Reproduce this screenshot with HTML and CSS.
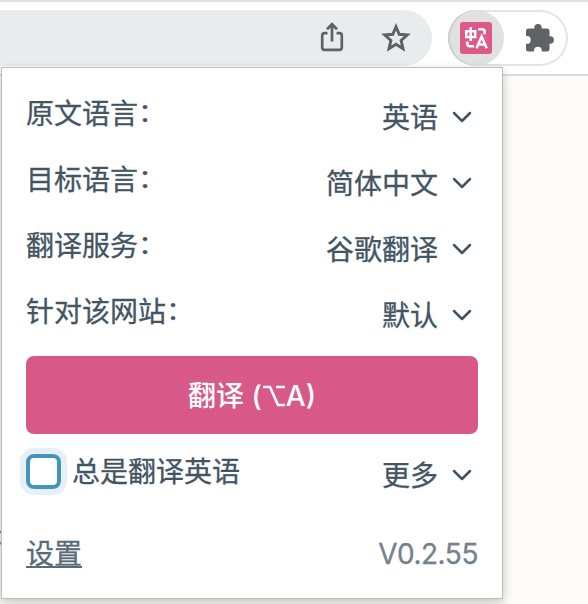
FILE: index.html
```html
<!DOCTYPE html>
<html lang="zh-CN">
<head>
<meta charset="utf-8">
<title>翻译</title>
<link rel="stylesheet" href="styles.css">
</head>
<body>
<header class="toolbar">
  <div class="omnibox">
    <svg class="icon-share" width="24" height="32" viewBox="0 0 24 32" fill="none" stroke="#5f6164" stroke-width="2.7"><path d="M7.5 11.2H4.5Q2.2 11.2 2.2 13.5V25.5Q2.2 27.8 4.5 27.8H19.5Q21.8 27.8 21.8 25.5V13.5Q21.8 11.2 19.5 11.2H16.5M12 19.5V2.5M7 7.2L12 2.2L17 7.2"/></svg>
    <svg class="icon-star" width="30" height="30" viewBox="0 0 30 30" fill="none" stroke="#5f6164" stroke-width="2.9"><path d="M15 3.7L18.2 11.3L26.3 12L20.1 17.4L22 25.7L15 21.3L8 25.7L9.9 17.4L3.7 12L11.8 11.3Z"/></svg>
  </div>
  <div class="extensions">
    <div class="extension-active">
      <svg width="32" height="32" viewBox="0 0 32 32" fill="none" stroke="#fff" stroke-width="2.5"><rect width="32" height="32" rx="3" fill="#db5a89" stroke="none"/><path d="M6.2 9.2H15.2V15H6.2ZM10.7 5V19M18.2 7.3H22Q24.7 7.3 24.7 10V12.3M7.3 19.5V21.5Q7.3 24.3 10 24.3H14M16.5 26.3L21.6 14.5L26.7 26.3M18 22.5H25"/></svg>
    </div>
    <svg class="icon-puzzle" width="30" height="30" viewBox="0 0 30 30" fill="#5f6368"><path d="M3.5 5.5H9.3V4.7A3.7 3.7 0 0 1 16.7 4.7V5.5H22Q24.5 5.5 24.5 8V13.3H25.2A3.7 3.7 0 0 1 25.2 20.7H24.5V26Q24.5 28.5 22 28.5H16.8V27.7A3.9 3.9 0 0 0 9 27.7V28.5H3.5Q1 28.5 1 26V20.8H1.8A3.9 3.9 0 0 0 1.8 13H1V8Q1 5.5 3.5 5.5Z"/></svg>
  </div>
</header>
<span class="page-text">:</span>
<main class="popup">
  <div class="row"><span class="label">原文语言<span class="colon">：</span></span><span class="select"><span class="value">英语</span><svg class="chevron" viewBox="0 0 20 12"><path d="M2 2L10 10L18 2"/></svg></span></div>
  <div class="row"><span class="label">目标语言<span class="colon">：</span></span><span class="select"><span class="value">简体中文</span><svg class="chevron" viewBox="0 0 20 12"><path d="M2 2L10 10L18 2"/></svg></span></div>
  <div class="row"><span class="label">翻译服务<span class="colon">：</span></span><span class="select"><span class="value">谷歌翻译</span><svg class="chevron" viewBox="0 0 20 12"><path d="M2 2L10 10L18 2"/></svg></span></div>
  <div class="row"><span class="label">针对该网站<span class="colon">：</span></span><span class="select"><span class="value">默认</span><svg class="chevron" viewBox="0 0 20 12"><path d="M2 2L10 10L18 2"/></svg></span></div>
  <button class="translate">翻译 (<svg class="option-key" viewBox="0 0 24 22"><path d="M1 2H8L16 20H23M14 2H23"/></svg>A)</button>
  <div class="row row-always"><label class="always"><span class="checkbox"></span><span class="value">总是翻译英语</span></label><span class="select"><span class="value">更多</span><svg class="chevron" viewBox="0 0 20 12"><path d="M2 2L10 10L18 2"/></svg></span></div>
  <footer class="footer"><a class="settings">设置</a><span class="version">V0.2.55</span></footer>
</main>
</body>
</html>
```
FILE: styles.css
```css
* { box-sizing: border-box; }
body {
  margin: 0;
  width: 588px;
  height: 604px;
  overflow: hidden;
  position: relative;
  background: #fdfcf8;
  color: #435463;
  font: 28px/42px Inter, "Noto Sans CJK SC", sans-serif;
}
.toolbar {
  display: flex;
  align-items: flex-start;
  gap: 16px;
  height: 76px;
  padding-top: 8px;
  border-top: 2px solid #dfdfe5;
  border-bottom: 2px solid #dcdde0;
  background: #fff;
}
.omnibox {
  display: flex;
  align-items: center;
  justify-content: flex-end;
  gap: 37px;
  width: 432px;
  height: 56px;
  padding-right: 21px;
  border-radius: 0 28px 28px 0;
  background: #e9ebed;
}
.extensions {
  display: flex;
  align-items: center;
  gap: 21px;
  width: 120px;
  height: 56px;
  border-radius: 28px;
  box-shadow: inset 0 0 0 2px #e4e4e5;
}
.extension-active {
  display: flex;
  align-items: center;
  justify-content: center;
  width: 56px;
  height: 56px;
  border-radius: 50%;
  background: #e1e1e1;
  box-shadow: inset 2px 0 0 #cecece;
}
.page-text {
  position: absolute;
  left: -5px;
  top: 514px;
  color: #747c91;
}
.popup {
  position: absolute;
  left: 1px;
  top: 67px;
  width: 502px;
  height: 532px;
  padding: 24px 24px 0;
  border: 1px solid #bcbcbc;
  background: #fff;
  box-shadow: 0 4px 10px rgba(0, 0, 0, .22);
}
.row {
  display: flex;
  align-items: flex-start;
  justify-content: space-between;
  height: 66px;
}
.label,
.value {
  padding-top: 1px;
  -webkit-text-stroke: .3px currentColor;
}
.colon {
  display: inline-block;
  line-height: 1;
  transform: translate(0, -1px) scaleY(.92);
}
.select {
  display: flex;
  align-items: center;
  gap: 14px;
  height: 50px;
  padding-right: 6px;
}
.chevron {
  width: 20px;
  height: 12px;
  fill: none;
  stroke: #435463;
  stroke-width: 2.5;
  stroke-linecap: round;
  stroke-linejoin: round;
}
.translate {
  display: flex;
  align-items: center;
  justify-content: center;
  width: 452px;
  height: 78px;
  margin: 0;
  padding: 1px 0 0;
  border: 0;
  border-radius: 8px;
  background: #d85888;
  color: #fff;
  font: inherit;
  font-weight: 500;
  white-space: pre;
}
.option-key {
  width: 24px;
  height: 22px;
  fill: none;
  stroke: #fff;
  stroke-width: 2.6;
}
.row-always {
  height: 82px;
  padding-top: 16px;
}
.always {
  display: flex;
  align-items: center;
  gap: 11px;
  height: 43px;
}
.checkbox {
  width: 35px;
  height: 35px;
  border: 4px solid #4494bd;
  border-radius: 8px;
  box-shadow: 0 0 0 6px #e6f0f7;
}
.footer {
  display: flex;
  justify-content: space-between;
  padding-top: 16px;
}
.settings {
  padding-top: 1px;
  color: #596b78;
  text-decoration: underline;
  text-decoration-thickness: 2px;
  text-underline-offset: 2px;
  -webkit-text-stroke: .3px currentColor;
}
.version {
  padding-top: 1px;
  color: #73828c;
  letter-spacing: -.45px;
  -webkit-text-stroke: .3px currentColor;
}
```
